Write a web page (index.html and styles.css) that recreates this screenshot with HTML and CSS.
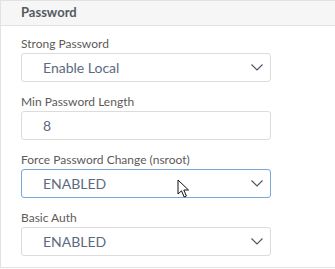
FILE: index.html
```html
<!DOCTYPE html>
<html>
  <head>
    <link rel="stylesheet" href="styles.css">
    <title>Password</title>
  </head>
  <body>
    <div class="panel">
      <div class="panel-header">Password</div>
      <div class="panel-body">
        <div class="field">
          <label class="field-label">Strong Password</label>
          <div class="select">
            <span class="select-value">Enable Local</span>
            <svg class="chevron" width="12" height="7" viewBox="0 0 12 7"><path d="M0.5 0.5 L6 6 L11.5 0.5" fill="none" stroke="#4b5466" stroke-width="1.1"/></svg>
          </div>
        </div>
        <div class="field">
          <label class="field-label">Min Password Length</label>
          <div class="input"><span class="select-value">8</span></div>
        </div>
        <div class="field">
          <label class="field-label">Force Password Change (nsroot)</label>
          <div class="select focused">
            <span class="select-value">ENABLED</span>
            <svg class="chevron" width="12" height="7" viewBox="0 0 12 7"><path d="M0.5 0.5 L6 6 L11.5 0.5" fill="none" stroke="#4b5466" stroke-width="1.1"/></svg>
            <svg class="cursor" width="14" height="20" viewBox="0 0 14 20"><path d="M1 1 L1 15 L4.5 11.8 L7.2 18 L9.4 17 L6.8 11 L11.5 11 Z" fill="#fff" stroke="#111" stroke-width="1"/></svg>
          </div>
        </div>
        <div class="field">
          <label class="field-label">Basic Auth</label>
          <div class="select">
            <span class="select-value">ENABLED</span>
            <svg class="chevron" width="12" height="7" viewBox="0 0 12 7"><path d="M0.5 0.5 L6 6 L11.5 0.5" fill="none" stroke="#4b5466" stroke-width="1.1"/></svg>
          </div>
        </div>
      </div>
    </div>
  </body>
</html>
```

FILE: styles.css
```css
* {
  box-sizing: border-box;
}
body {
  margin: 0;
  background-color: #fff;
  font-family: Lato, "Noto Sans", sans-serif;
}
.panel {
  width: 100%;
  height: 268px;
  border: 1px solid #e2e2e2;
  border-right: none;
}
.panel-header {
  height: 25px;
  padding-left: 20px;
  line-height: 23px;
  font-size: 13px;
  font-weight: bold;
  color: #555a60;
  background-color: #f6f6f6;
  border-bottom: 1px solid #e2e2e2;
}
.panel-body {
  padding: 9px 0 0 20px;
}
.field {
  margin-bottom: 11px;
}
.field-label {
  display: block;
  height: 18px;
  line-height: 18px;
  font-size: 12px;
  color: #5e5a58;
}
.select,
.input {
  position: relative;
  display: flex;
  align-items: center;
  justify-content: space-between;
  width: 250px;
  height: 29px;
  padding: 0 4px 0 21px;
  border: 1px solid #dcdcdc;
  border-radius: 3px;
  background-color: #fff;
}
.focused {
  border-color: #7aa7da;
}
.select-value {
  font-size: 14px;
  color: #5c6a80;
}
.chevron {
  margin-right: 3px;
}
.cursor {
  position: absolute;
  left: 155px;
  top: 9px;
}
```
